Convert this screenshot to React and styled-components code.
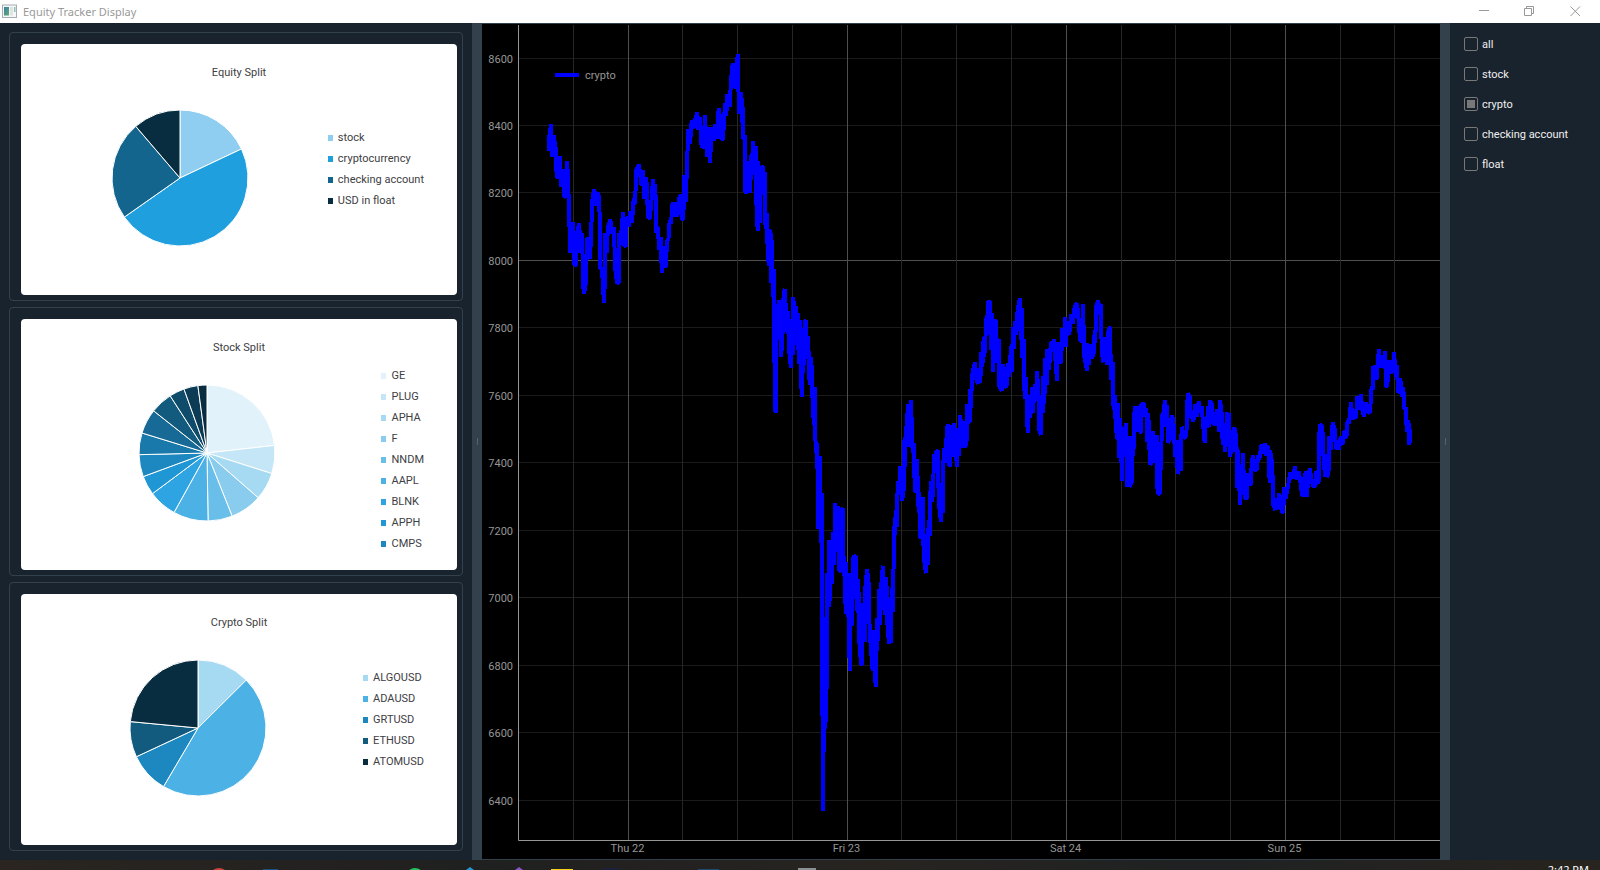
import React, { useLayoutEffect, useRef, useState } from "react";
import styled, { createGlobalStyle } from "styled-components";

const GlobalStyle = createGlobalStyle`
  *, *::before, *::after { box-sizing: border-box; }
  html, body { margin: 0; padding: 0; }
  body { background: #19232d; }
`;

const TITLE_FONT = `"Noto Sans", "Open Sans", sans-serif`;
const UI_FONT = `Roboto, "Noto Sans", sans-serif`;

const Desktop = styled.div`
  display: flex;
  flex-direction: column;
  height: 100vh;
  min-height: 640px;
  overflow: hidden;
  font-family: ${UI_FONT};
  font-size: 11px;
  line-height: 16px;
`;

/* ---------- title bar ---------- */

const TitleBar = styled.header`
  display: flex;
  align-items: center;
  flex: none;
  height: 23px;
  padding: 0 2px;
  background: #ffffff;
  color: #999999;
`;

const WindowTitle = styled.h1`
  flex: 1;
  margin: 0 0 0 5px;
  font-family: ${TITLE_FONT};
  font-size: 11px;
  font-weight: 400;
  line-height: 16px;
`;

const WindowButton = styled.button`
  display: flex;
  align-items: center;
  justify-content: center;
  width: 46px;
  height: 21px;
  padding: 0;
  border: 0;
  background: transparent;
  color: #999999;
`;

/* ---------- main window ---------- */

const Window = styled.main`
  display: flex;
  flex: 1;
  min-height: 0;
  background: #19232d;
`;

const ChartColumn = styled.section`
  display: flex;
  flex-direction: column;
  gap: 6px;
  flex: 0 0 472px;
  padding: 9px;
`;

const Group = styled.div`
  display: flex;
  flex: 1 1 0;
  min-height: 0;
  padding: 11px 5px 5px 11px;
  border: 1px solid #32414b;
  border-radius: 4px;
`;

const PieCard = styled.figure`
  display: flex;
  flex-direction: column;
  flex: 1;
  min-width: 0;
  margin: 0;
  padding: 21px 33px 21px 20px;
  border-radius: 4px;
  background: #ffffff;
  color: #404044;
`;

const PieTitle = styled.figcaption`
  margin-left: 13px;
  text-align: center;
`;

const PieBody = styled.div`
  display: flex;
  flex: 1;
  min-height: 0;
  gap: 9px;
`;

const PieArea = styled.div`
  display: flex;
  flex: 1;
  align-items: center;
  justify-content: center;
`;

const Legend = styled.ul`
  display: flex;
  flex-direction: column;
  align-self: ${(p) => (p.$full ? "flex-start" : "center")};
  margin: ${(p) => (p.$full ? "9px 0 0" : "0 0 16px")};
  padding: 0;
  list-style: none;
`;

const LegendItem = styled.li`
  display: flex;
  align-items: center;
  gap: 5px;
  height: 21px;
  white-space: nowrap;
`;

const Swatch = styled.span`
  width: 5px;
  height: 6px;
  background: ${(p) => p.$color};
`;

const Splitter = styled.div`
  display: flex;
  align-items: center;
  justify-content: center;
  flex: 0 0 10px;
  background: #32414b;

  &::before {
    content: "";
    width: 1px;
    height: 7px;
    background: #54626c;
  }
`;

const PlotPane = styled.section`
  flex: 1;
  min-width: 0;
  overflow: hidden;
  border-top: 1px solid #32414b;
  border-bottom: 1px solid #32414b;
  background: #000000;

  svg {
    display: block;
    font-family: ${UI_FONT};
    font-size: 11px;
  }
`;

const FilterPanel = styled.form`
  display: flex;
  flex-direction: column;
  gap: 14px;
  flex: 0 0 150px;
  padding: 14px;
`;

const FilterLabel = styled.label`
  display: flex;
  align-items: flex-start;
  gap: 4px;
  height: 16px;
  color: #f0f0f0;
  white-space: nowrap;
`;

const FilterBox = styled.input`
  appearance: none;
  display: grid;
  place-items: center;
  flex: none;
  width: 14px;
  height: 14px;
  margin: 0;
  border: 1px solid #787878;
  border-radius: 2px;
  background: transparent;

  &:checked::before {
    content: "";
    width: 8px;
    height: 8px;
    background: #787878;
  }
`;

/* ---------- taskbar ---------- */

const Taskbar = styled.footer`
  display: flex;
  justify-content: space-between;
  flex: none;
  height: 10px;
  padding-right: 11px;
  overflow: hidden;
  background: linear-gradient(90deg, #2a2520, #202020 30%, #272420 55%, #1f2122 75%, #28241f);
  color: #ffffff;

  svg { display: block; flex: none; }
`;

const Clock = styled.time`
  margin-top: 2px;
  font-family: ${TITLE_FONT};
  white-space: nowrap;
`;

/* ---------- data ---------- */

const PIES = [
  {
    title: "Equity Split",
    slices: [
      ["stock", 64.7, "#8fcef0"],
      ["cryptocurrency", 234.9, "#209fdf"],
      ["checking account", 319.4, "#14658e"],
      ["USD in float", 360, "#082d40"],
    ],
  },
  {
    title: "Stock Split",
    full: true,
    slices: [
      ["GE", 83.6, "#e1f2fa"],
      ["PLUG", 107.6, "#c4e6f6"],
      ["APHA", 131.2, "#a6d9f2"],
      ["F", 158.3, "#89ccee"],
      ["NNDM", 179.1, "#6abfea"],
      ["AAPL", 209, "#4cb2e6"],
      ["BLNK", 233.3, "#2ea5e2"],
      ["APPH", 249.7, "#1f97d5"],
      ["CMPS", 268.6, "#1c88bf"],
      [null, 287.1, "#1979aa"],
      [null, 308.3, "#166a95"],
      [null, 327.2, "#125b7f"],
      [null, 340.2, "#0f4b6a"],
      [null, 352.3, "#0c3c55"],
      [null, 360, "#082d40"],
    ],
  },
  {
    title: "Crypto Split",
    slices: [
      ["ALGOUSD", 45.2, "#a6d9f2"],
      ["ADAUSD", 210.5, "#4cb2e6"],
      ["GRTUSD", 245, "#1c88bf"],
      ["ETHUSD", 275.4, "#125b7f"],
      ["ATOMUSD", 360, "#082d40"],
    ],
  },
];

const FILTERS = ["all", "stock", "crypto", "checking account", "float"];

/* Plot space: 922 x 815 units. Each run of samples is recorded in thirds of a
   unit from its own origin. */
const PLOT_W = 922;
const PLOT_H = 815;
const RUNS = [
  {
    origin: [-43, -5],
    samples:
      "221,392 221,365 228,312 231,412 236,346 240,412 241,364 245,470 249,473 256,408 257,500 264,447 267,530 271,530 276,424 279,470 283,600 286,698 293,606 298,735 303,735 306,640 313,610 316,700 321,640 325,800 327,822 333,785 336,656 341,655 345,717 348,650 352,540 358,508 363,558 367,517 373,530 376,745 381,748 387,848 390,770 390,640 395,698 399,620 406,598 411,640 417,622 420,740 426,790 432,785 432,640 437,674 440,622 444,577 447,676 453,680 455,590 461,620 466,575 471,608 476,535 480,553 484,450 492,434 500,498 504,450 508,537 514,472 519,590 524,597 528,560 534,478 538,537 541,492 544,640 549,620 552,690 558,652 560,758 565,678 568,740 573,738 576,660 580,663 584,600 588,612 593,546 600,590 604,545 607,590 612,535 617,524 620,597 625,597 628,465 632,545 636,435 640,328 645,373 650,300 655,327 660,300 667,277 670,330 675,290 680,385 685,320 687,387 690,284 696,410 700,320 705,428 710,322 716,362 721,312 726,358 731,265 736,300 739,357 744,357 750,250 754,288 757,222 764,260 768,180",
  },
  {
    origin: [152, 15],
    samples:
      "188,70 192,143 197,96 197,147 203,42 207,222 212,156 216,248 217,175 220,298 224,285 226,455 231,458 234,364 239,460 243,345 244,420 249,304 253,355 257,317 259,480 263,572 263,364 269,550 273,385 279,378 281,465 284,395 285,545 288,565 291,520 293,645 297,678 297,568 302,583 304,730 306,600 308,770 312,688 313,910 315,1110 318,1118 320,792 326,892 328,781 333,950 337,905 341,756 345,748 349,850 353,880 355,812 358,935 363,984 363,845 368,945 370,772 376,880 379,797 381,915 384,820 386,972 390,840 395,1070 397,870 400,1000 404,845 408,841 410,958 414,888 419,1035 424,952 427,1060 430,1130 434,1158",
  },
  {
    origin: [262, 335],
    samples:
      "104,82 107,280 112,250 114,508 120,288 123,550 126,400 126,770 129,1352 134,772 136,1108 140,970 142,640 146,740 148,540 151,722 153,540 156,672 160,517 163,615 166,428 172,530 174,437 177,630 182,635 184,450 189,445 191,638 195,652 197,763 198,605 203,772 205,640 209,932 210,800 213,640 217,798 218,598 222,587 228,592 229,710 233,760 235,658 238,842 243,912 246,916 248,730 254,845 256,685 261,628 261,778 265,640 269,815 272,858 278,932 280,810 284,945 288,980 291,775 295,842 297,688 300,795 305,650 309,617 312,712 315,764 319,650 322,785 327,853 327,733 332,850 335,685 338,755 341,600 341,497 345,525 347,450 351,500 353,363 358,405 360,317 366,422 371,390 371,240 375,320 377,198 381,240 383,133 387,262 393,121 398,280 402,250 404,393 411,393 411,298 416,460 418,395 420,532 425,532 428,412 431,590 438,640 438,523 443,615 446,480 449,527 452,362 455,425 459,404 462,283 465,340 468,276 474,271 476,425 483,485 483,370 488,460 491,265 494,310 498,252 503,193 506,305 509,320 514,196 517,290 523,190 527,277 531,320 534,203 537,287 541,165 546,265 550,184 556,262 560,240",
  },
  {
    origin: [422, 255],
    samples:
      "81,373 84,428 90,423 90,327 94,385 95,290 99,272 105,247 110,305 114,310 120,265 121,308 124,215 127,262 131,170 133,230 140,105 142,165 144,64 150,67 154,210 156,98 159,276 165,122 168,122 172,250 176,178 178,320 185,332 189,252 194,320 200,318 203,250 208,290 213,198 215,275 219,142 221,207 225,123 229,165 233,88 240,55 242,180 246,85 246,235 251,178 251,287 255,358 258,290 263,458 266,346 271,415 276,320 278,400 285,312 290,362 291,274 296,355 297,448 303,465 305,355 308,400 310,288 313,373 316,235 321,315 322,207 327,270 333,185 338,215 342,178 347,250 351,303 353,186 358,245 364,246 366,145 370,195 376,112 378,200 382,122 386,165 390,150 393,103 399,130 404,80 411,70 416,122 420,180 425,185 429,73 433,230 441,272 441,188 446,255 450,193 456,235 462,215 464,150 466,190 468,80 475,62 479,105 483,72 485,215 490,247 495,170 502,256 505,155 510,140 513,300 518,245 519,373 524,390 525,346 527,442 533,480 533,368 538,535 541,415 546,604 549,442 555,530 557,430 562,620 565,468 568,620 575,608",
  },
  {
    origin: [602, 255],
    samples:
      "37,467 40,528 44,378 47,455 53,378 57,440 63,460 64,372 72,372 75,410 79,385 82,485 85,400 90,553 95,548 99,454 104,548 110,465 110,600 114,642 119,640 119,530 123,570 126,405 130,400 135,361 138,440 141,375 144,488 149,478 155,406 160,420 163,480 166,530 170,480 173,583 179,535 182,572 185,440 191,475 197,470 200,445 203,340 209,350 213,415 217,395 220,424 226,373 230,410 236,365 241,397 245,378 249,430 254,488 257,412 262,445 263,378 267,440 270,361 276,375 280,430 288,435 291,388 297,455 300,361 305,400 308,495 313,433 316,515 321,395 327,500 327,400 331,532 336,450 342,515 343,442 349,470 352,625 354,510 360,674 362,560 366,645 368,520 372,600 375,655 382,653 383,580 388,610 393,615 395,545 399,527 405,572 411,568 414,527 418,538 425,492 430,520 434,490 438,528 445,497 449,608 450,510 455,540 459,610 460,675 466,690 470,655 475,688 478,640 485,695 490,698 492,622 497,655 502,630 508,595 511,577 517,597 525,560 530,600 537,575 541,605 546,645 552,645 552,600 558,573 560,650 565,600 569,566 575,600 580,620 587,615 588,572 593,608 598,600 598,465 600,433 607,440 610,520 615,590 618,522 622,592 626,570 628,468 633,510 638,427 645,450 648,508 654,485 657,508 662,470 667,495 674,450 679,475 683,420 687,432 693,367 698,420 703,388 708,415 712,348 716,388 723,343 727,390 732,410 737,367 743,398 750,395 755,320 758,330 760,257 767,295 771,293 773,243 777,208 782,262 788,225 792,265 795,214 798,320 802,318 806,240 812,275 818,278 822,217 828,290 831,255 834,340 841,295 846,350 850,322 853,388 858,382 860,455 865,420 867,494 868,430 870,490",
  },
];

const SERIES = RUNS.flatMap(({ origin, samples }) =>
  samples.split(" ").map((pair) => {
    const [x, y] = pair.split(",").map(Number);
    return [origin[0] + x / 3, origin[1] + y / 3];
  })
);

const DAYS = ["Thu 22", "Fri 23", "Sat 24", "Sun 25"];
const PRICES = Array.from({ length: 12 }, (_, i) => 8600 - i * 200);
const QUARTER_DAYS = Array.from({ length: 16 }, (_, i) => i);

/* ---------- components ---------- */

function Pie({ slices, label }) {
  const at = (deg) => {
    const a = (deg * Math.PI) / 180;
    return `${(68 * Math.sin(a)).toFixed(2)} ${(-68 * Math.cos(a)).toFixed(2)}`;
  };
  return (
    <svg width="138" height="138" viewBox="-69 -69 138 138" role="img" aria-label={label}>
      {slices.map(([, end, color], i) => {
        const start = i ? slices[i - 1][1] : 0;
        const large = end - start > 180 ? 1 : 0;
        return (
          <path
            key={end}
            d={`M0 0L${at(start)}A68 68 0 ${large} 1 ${at(end)}Z`}
            fill={color}
            stroke="#ffffff"
            strokeWidth="1"
            strokeLinejoin="bevel"
          />
        );
      })}
    </svg>
  );
}

function PieChart({ title, slices, full }) {
  return (
    <Group>
      <PieCard>
        <PieTitle>{title}</PieTitle>
        <PieBody>
          <PieArea>
            <Pie slices={slices} label={title} />
          </PieArea>
          <Legend $full={full}>
            {slices
              .filter(([name]) => name)
              .map(([name, , color]) => (
                <LegendItem key={name}>
                  <Swatch $color={color} />
                  {name}
                </LegendItem>
              ))}
          </Legend>
        </PieBody>
      </PieCard>
    </Group>
  );
}

function PricePlot() {
  const pane = useRef(null);
  const [size, setSize] = useState({ w: 958, h: 835 });

  useLayoutEffect(() => {
    const node = pane.current;
    const measure = () => setSize({ w: node.clientWidth, h: node.clientHeight });
    measure();
    const observer = new ResizeObserver(measure);
    observer.observe(node);
    return () => observer.disconnect();
  }, []);

  const left = 36;
  const top = 1;
  const bottom = size.h - 19;
  const sx = (x) => left + (x * (size.w - left)) / PLOT_W;
  const sy = (y) => top + (y * (bottom - top)) / PLOT_H;
  const tickX = (i) => Math.floor(sx(55.32 + i * 54.77)) + 0.5;
  const tickY = (price) => Math.floor(sy(33.02 + (8600 - price) * 0.3373)) + 0.5;

  return (
    <PlotPane ref={pane}>
      <svg width={size.w} height={size.h} role="img" aria-label="crypto value over time">
        {PRICES.map((p) => (
          <line
            key={p}
            x1={left}
            x2={size.w}
            y1={tickY(p)}
            y2={tickY(p)}
            stroke={p === 8000 ? "#4f4f4f" : p === 7000 ? "#222222" : "#1a1a1a"}
          />
        ))}
        {QUARTER_DAYS.map((i) => (
          <line
            key={i}
            x1={tickX(i)}
            x2={tickX(i)}
            y1={top}
            y2={bottom}
            stroke={i % 4 === 1 ? "#4f4f4f" : "#262626"}
          />
        ))}
        <path d={`M${left + 0.5} ${top}V${bottom + 0.5}H${size.w}`} fill="none" stroke="#969696" />
        {PRICES.map((p) => (
          <text key={p} x={left - 5} y={tickY(p) + 4.5} textAnchor="end" fill="#969696">
            {p}
          </text>
        ))}
        {DAYS.map((d, i) => (
          <text key={d} x={tickX(i * 4 + 1) - 1} y={bottom + 12} textAnchor="middle" fill="#969696">
            {d}
          </text>
        ))}
        <polyline
          points={SERIES.map(([x, y]) => `${sx(x).toFixed(1)},${sy(y).toFixed(1)}`).join(" ")}
          fill="none"
          stroke="#0000ff"
          strokeWidth="4"
          strokeLinejoin="bevel"
          shapeRendering="crispEdges"
        />
        <rect x={left + 37} y="49" width="24" height="4" fill="#0000ff" />
        <text x={left + 67} y="55" fill="#969696">
          crypto
        </text>
      </svg>
    </PlotPane>
  );
}

export default function App() {
  const [checked, setChecked] = useState({ crypto: true });
  return (
    <Desktop>
      <GlobalStyle />
      <TitleBar>
        <svg width="16" height="15" viewBox="0 0 16 15" aria-hidden="true">
          <defs>
            <linearGradient id="pane" x1="0" y1="0" x2="1" y2="1">
              <stop offset="0" stopColor="#3f7fa8" />
              <stop offset="1" stopColor="#5cab72" />
            </linearGradient>
          </defs>
          <rect x="0.5" y="1" width="14" height="12.5" fill="#f4f6f7" stroke="#a3adb3" />
          <rect x="2" y="3" width="5" height="8.5" fill="url(#pane)" />
          <rect x="8" y="3" width="3" height="8.5" fill="#e0e2e4" />
          <rect x="12" y="3" width="1.5" height="5" fill="#8fc3b4" />
        </svg>
        <WindowTitle>Equity Tracker Display</WindowTitle>
        <WindowButton type="button" aria-label="Minimize">
          <svg width="11" height="11" stroke="currentColor">
            <path d="M1 4.5H11" />
          </svg>
        </WindowButton>
        <WindowButton type="button" aria-label="Restore">
          <svg width="11" height="11" fill="none" stroke="currentColor">
            <path d="M0.5 2.5H7.5V9.5H0.5ZM2.5 2.5V0.5H9.5V7.5H7.5" />
          </svg>
        </WindowButton>
        <WindowButton type="button" aria-label="Close">
          <svg width="11" height="11" stroke="currentColor">
            <path d="M0.5 0.5L10 10M10 0.5L0.5 10" />
          </svg>
        </WindowButton>
      </TitleBar>

      <Window>
        <ChartColumn>
          {PIES.map((pie) => (
            <PieChart key={pie.title} {...pie} />
          ))}
        </ChartColumn>
        <Splitter />
        <PricePlot />
        <Splitter />
        <FilterPanel>
          {FILTERS.map((name) => (
            <FilterLabel key={name}>
              <FilterBox
                type="checkbox"
                name={name}
                checked={!!checked[name]}
                onChange={(e) => setChecked({ ...checked, [name]: e.target.checked })}
              />
              {name}
            </FilterLabel>
          ))}
        </FilterPanel>
      </Window>

      <Taskbar>
        <svg width="830" height="10" aria-hidden="true">
          <circle cx="219" cy="18" r="10" fill="#c9473a" />
          <rect x="263" y="9" width="15" height="2" fill="#1d4f80" />
          <circle cx="415" cy="17" r="9" fill="#25c45a" />
          <path d="M466 10L470 7L474 10Z" fill="#2498d5" />
          <path d="M515 10L519 7L523 10Z" fill="#8a56c2" />
          <rect x="551" y="9" width="22" height="2" fill="#f7d417" />
          <rect x="602" y="8" width="18" height="2" fill="#1d2038" />
          <rect x="698" y="9" width="21" height="2" fill="#1c4a70" />
          <rect x="798" y="8" width="18" height="2" fill="#8b9096" />
        </svg>
        <Clock>2:42 PM</Clock>
      </Taskbar>
    </Desktop>
  );
}
